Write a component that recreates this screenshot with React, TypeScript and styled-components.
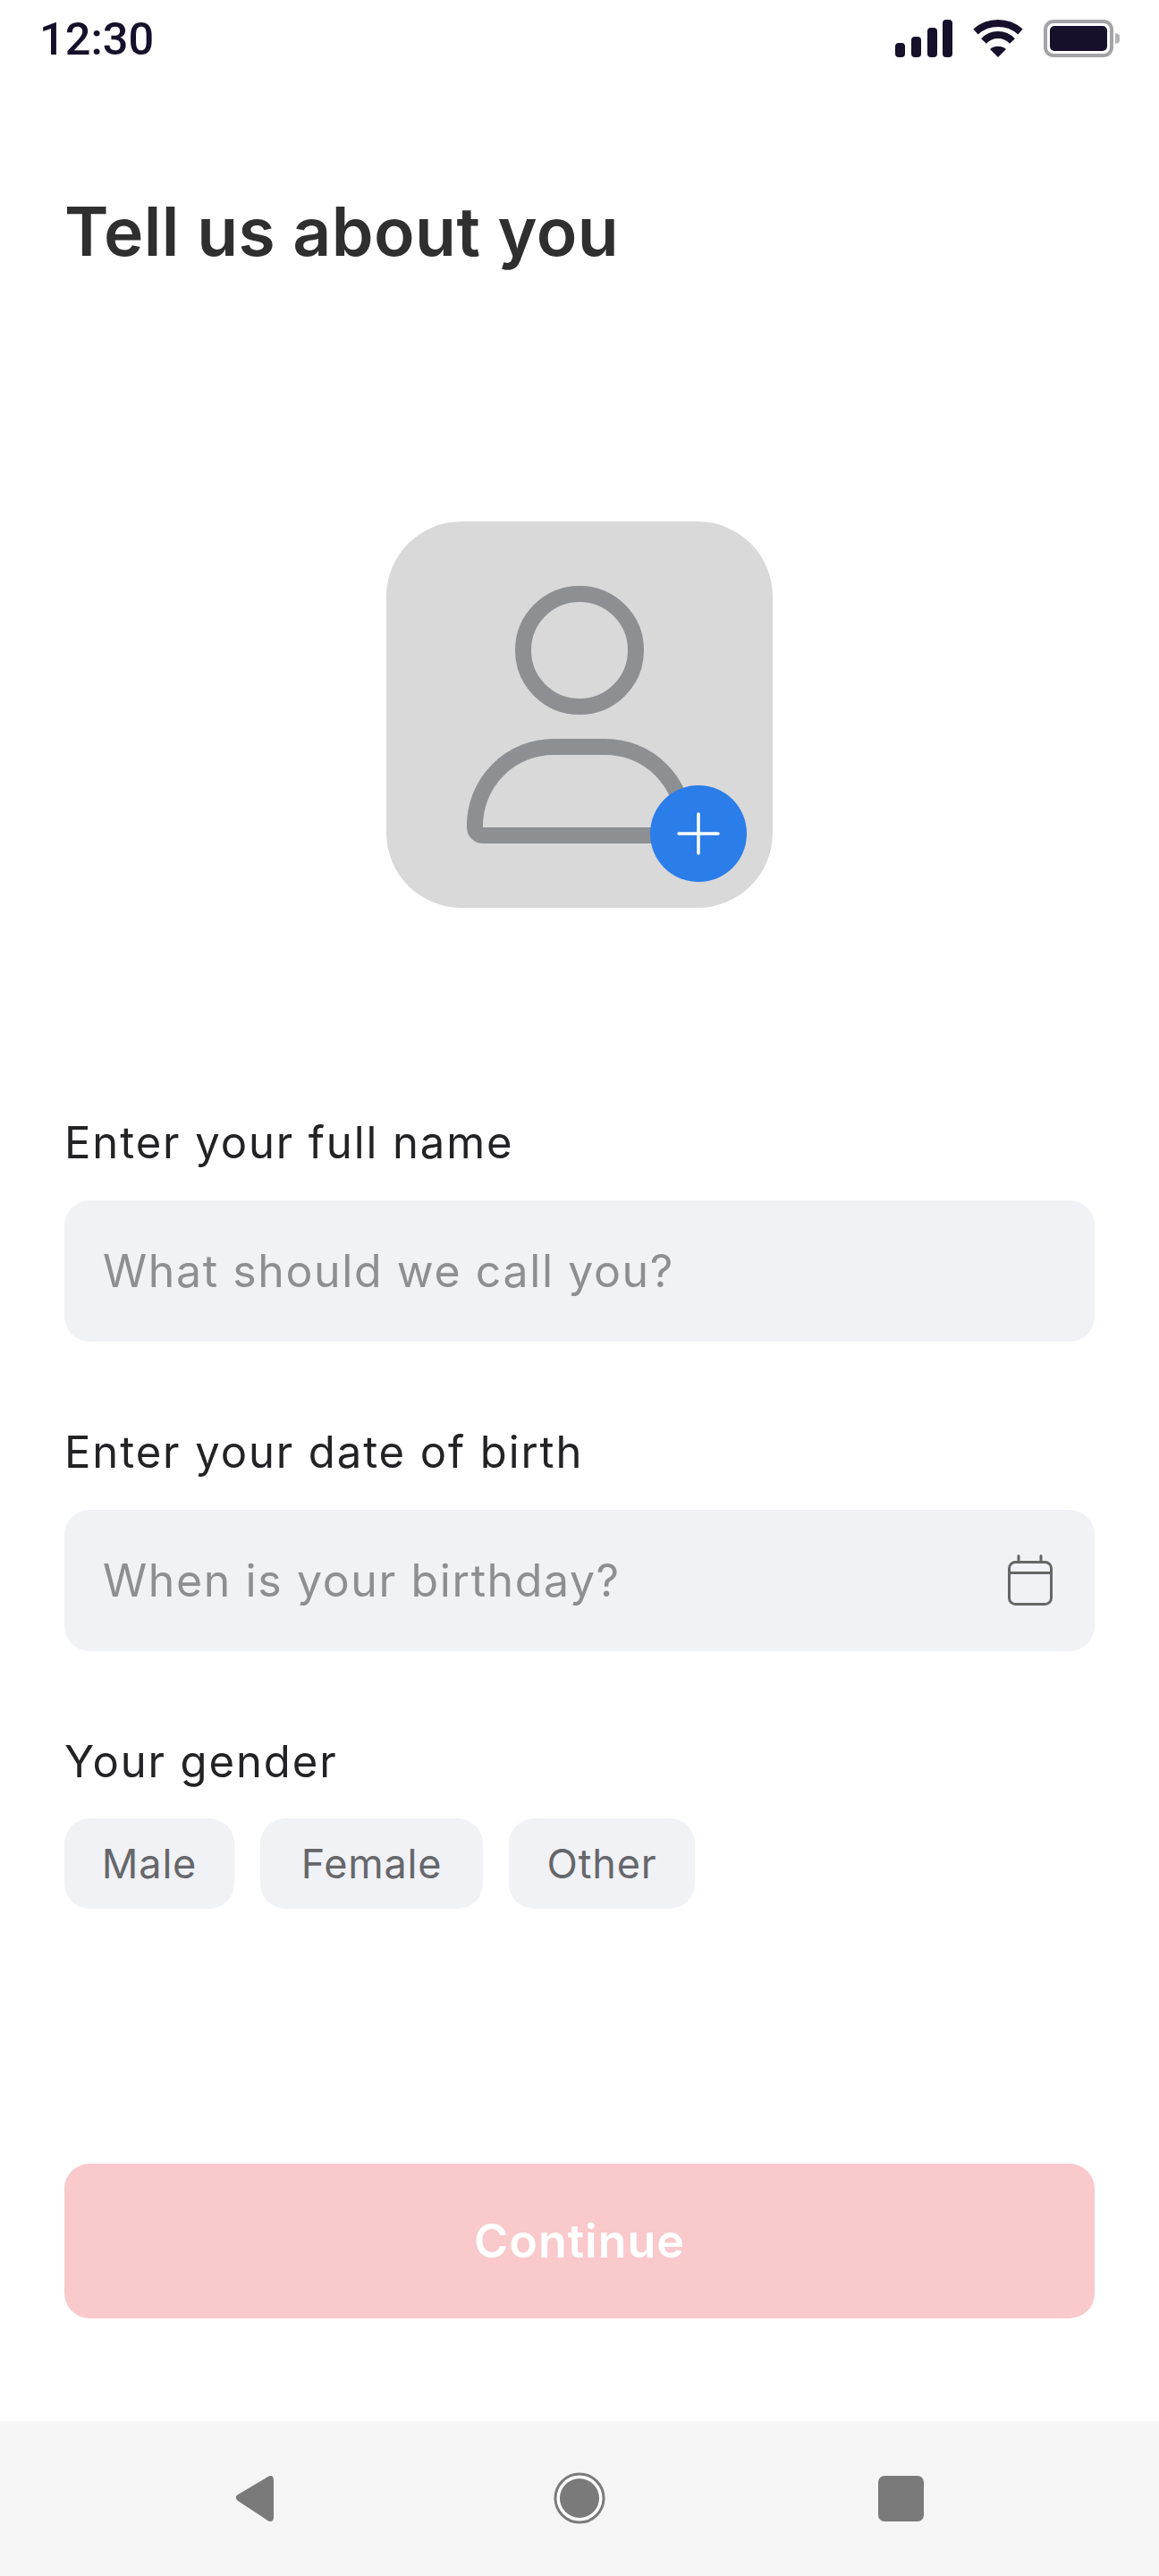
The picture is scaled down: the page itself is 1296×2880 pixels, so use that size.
import React from "react";
import styled, { createGlobalStyle } from "styled-components";

const GlobalStyle = createGlobalStyle`
    html, body {
        margin: 0;
        padding: 0;
        background: #fff;
    }
`;

const Screen = styled.div`
    width: 1296px;
    height: 2880px;
    display: flex;
    flex-direction: column;
    background: #fff;
    font-family: "Inter", "Liberation Sans", sans-serif;
    overflow: hidden;
`;

const StatusBar = styled.div`
    height: 88px;
    padding: 0 44px;
    display: flex;
    justify-content: space-between;
    align-items: flex-start;
`;

const Time = styled.span`
    font-family: "Roboto", sans-serif;
    font-size: 50.5px;
    font-weight: 500;
    line-height: 88px;
    color: #16102b;
`;

const StatusIcons = styled.svg`
    margin: 22px 0 0;
    width: 251px;
    height: 42px;
`;

const Content = styled.div`
    flex: 1;
    padding: 0 72px;
    display: flex;
    flex-direction: column;
`;

const Title = styled.h1`
    margin: 128px 0 0;
    font-size: 75px;
    line-height: 86px;
    font-weight: 600;
    color: #2f2f2f;
    letter-spacing: 0.4px;
`;

const AvatarWrap = styled.div`
    margin: 281px auto 0;
    width: 432px;
    height: 432px;
    border-radius: 84px;
    background: #d9d9d9;
    position: relative;
`;

const AddBadge = styled.div`
    position: absolute;
    left: 295px;
    top: 295px;
    width: 108px;
    height: 108px;
    border-radius: 50%;
    background: #2b7de9;
    display: flex;
    align-items: center;
    justify-content: center;
`;

const Label = styled.div<{ $top: number }>`
    margin-top: ${(p) => p.$top}px;
    font-size: 49px;
    line-height: 60px;
    letter-spacing: 1.9px;
    color: #232326;
`;

const Field = styled.div`
    margin-top: 34px;
    height: 158px;
    border-radius: 28px;
    background: #f1f2f6;
    padding: 0 44px 0 43px;
    display: flex;
    align-items: center;
    justify-content: space-between;
`;

const Placeholder = styled.span`
    font-size: 50px;
    letter-spacing: 1.6px;
    color: #8e8f93;
`;

const ChipRow = styled.div`
    margin-top: 33px;
    display: flex;
    gap: 29px;
`;

const Chip = styled.div<{ $width: number }>`
    width: ${(p) => p.$width}px;
    height: 101px;
    border-radius: 28px;
    background: #f1f2f6;
    display: flex;
    align-items: center;
    justify-content: center;
    font-size: 45px;
    letter-spacing: 0.8px;
    color: #66676b;
`;

const ContinueButton = styled.div`
    margin-top: auto;
    margin-bottom: 115px;
    height: 173px;
    border-radius: 28px;
    background: #f9c9cb;
    display: flex;
    align-items: center;
    justify-content: center;
    color: #fff;
    font-size: 52px;
    font-weight: 600;
    letter-spacing: 1px;
`;

const NavBar = styled.div`
    height: 173px;
    background: #f5f5f5;
`;

const NavIcons = styled.svg`
    width: 1296px;
    height: 173px;
    display: block;
`;

const App: React.FC = () => {
    return (
        <Screen>
            <GlobalStyle />
            <StatusBar>
                <Time>12:30</Time>
                <StatusIcons viewBox="1001 22 251 42">
                    <rect x="1001" y="48" width="11" height="16" rx="4" fill="#16102b" />
                    <rect x="1019" y="41" width="11" height="23" rx="4" fill="#16102b" />
                    <rect x="1037" y="31" width="11" height="33" rx="4" fill="#16102b" />
                    <rect x="1054" y="22" width="11" height="42" rx="4" fill="#16102b" />
                    <path d="M1091 35.5a38 38 0 0 1 50 0" fill="none" stroke="#16102b" strokeWidth="8" />
                    <path d="M1100 46a22 22 0 0 1 32 0" fill="none" stroke="#16102b" strokeWidth="8" />
                    <path d="M1107 55a14 14 0 0 1 18 0l-9 9z" fill="#16102b" />
                    <rect x="1169" y="24" width="74" height="38" rx="9" fill="none" stroke="#a3a3a7" strokeWidth="4" />
                    <rect x="1174" y="29" width="64" height="28" rx="5" fill="#16102b" />
                    <path d="M1247 37a6 6 0 0 1 0 12z" fill="#b5b5b9" />
                </StatusIcons>
            </StatusBar>
            <Content>
                <Title>Tell us about you</Title>
                <AvatarWrap>
                    <svg width="432" height="432" viewBox="432 583 432 432">
                        <circle cx="648" cy="727" r="63" fill="none" stroke="#8e8f92" strokeWidth="18" />
                        <path
                            d="M540 934a9 9 0 0 1-9-9v-2a88 88 0 0 1 88-88h58a88 88 0 0 1 88 88v11z"
                            fill="none"
                            stroke="#8e8f92"
                            strokeWidth="18"
                        />
                    </svg>
                    <AddBadge>
                        <svg width="50" height="50" viewBox="0 0 50 50">
                            <path d="M3 25h44M25 3v44" stroke="#fff" strokeWidth="3.5" strokeLinecap="round" />
                        </svg>
                    </AddBadge>
                </AvatarWrap>
                <Label $top={233}>Enter your full name</Label>
                <Field>
                    <Placeholder>What should we call you?</Placeholder>
                </Field>
                <Label $top={94}>Enter your date of birth</Label>
                <Field>
                    <Placeholder>When is your birthday?</Placeholder>
                    <svg width="56" height="58" viewBox="0 0 56 58">
                        <rect x="4.5" y="8.5" width="47" height="47" rx="7" fill="none" stroke="#666" strokeWidth="3" />
                        <path d="M4.5 20.5h47M15 1.5v7M40 1.5v7" fill="none" stroke="#666" strokeWidth="3" strokeLinecap="round" />
                    </svg>
                </Field>
                <Label $top={94}>Your gender</Label>
                <ChipRow>
                    <Chip $width={190}>Male</Chip>
                    <Chip $width={249}>Female</Chip>
                    <Chip $width={208}>Other</Chip>
                </ChipRow>
                <ContinueButton>Continue</ContinueButton>
            </Content>
            <NavBar>
                <NavIcons viewBox="0 2707 1296 173">
                    <path
                        d="M302 2768c3 0 4 2 4 5v41c0 3-1 5-4 5-1 0-3-1-4-2l-32-21c-3-3-3-5 0-7l32-19c1-1 3-2 4-2z"
                        fill="#7a7a7a"
                    />
                    <circle cx="648" cy="2793" r="27" fill="#fff" stroke="#7a7a7a" strokeWidth="3" />
                    <circle cx="648" cy="2793" r="22" fill="#7a7a7a" />
                    <rect x="982" y="2768" width="51" height="51" rx="7" fill="#7a7a7a" />
                </NavIcons>
            </NavBar>
        </Screen>
    );
};

export default App;
